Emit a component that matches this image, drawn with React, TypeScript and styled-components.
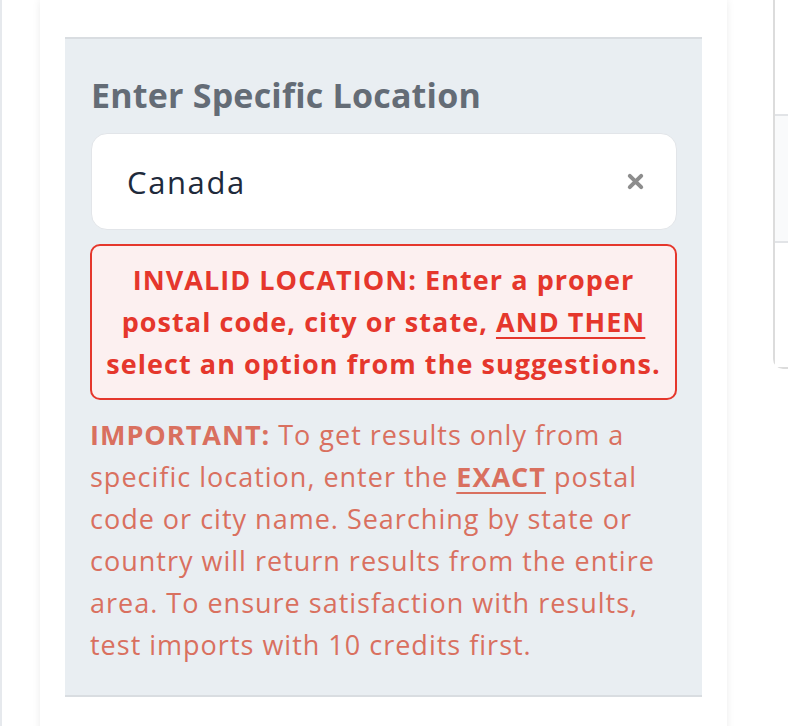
import styled, { createGlobalStyle } from 'styled-components'

const Global = createGlobalStyle`
  html, body {
    margin: 0;
    padding: 0;
    background: #ffffff;
    overflow: hidden;
  }
  body {
    font-family: "Open Sans", Lato, sans-serif;
  }
`

const Page = styled.div`
  display: flex;
  align-items: flex-start;
  height: 726px;
  width: 788px;
  overflow: hidden;
`

const EdgeStrip = styled.div`
  width: 2px;
  height: 100%;
  background: #e6e9ed;
  flex-shrink: 0;
`

const Card = styled.div`
  margin-left: 38px;
  width: 687px;
  height: 760px;
  flex-shrink: 0;
  background: #ffffff;
  box-shadow: 0 0 8px rgba(0, 0, 0, 0.08);
  padding: 37px 25px 0;
  box-sizing: border-box;
`

const Panel = styled.section`
  background: #e9eef2;
  border-top: 2px solid #d9dde1;
  border-bottom: 2px solid #d9dde1;
  padding: 36px 25px 29px;
`

const Heading = styled.h2`
  margin: 0 0 18px 1px;
  font-size: 34px;
  line-height: 40px;
  letter-spacing: 0.2px;
  font-weight: 700;
  color: #646c76;
`

const InputBox = styled.div`
  display: flex;
  align-items: center;
  justify-content: space-between;
  height: 97px;
  box-sizing: border-box;
  margin-left: 1px;
  padding: 0 31px 0 35px;
  background: #ffffff;
  border: 1.5px solid #e2e5e9;
  border-radius: 16px;
`

const InputText = styled.span`
  font-size: 31px;
  letter-spacing: 1.6px;
  color: #1e2a3b;
`

const ClearIcon = styled.svg`
  width: 19px;
  height: 19px;
  display: block;
`

const ErrorBox = styled.div`
  margin-top: 14px;
  padding: 13px 4px;
  background: #fcf0f0;
  border: 2px solid #e5372c;
  border-radius: 10px;
  text-align: center;
  font-size: 27px;
  line-height: 42px;
  letter-spacing: 1.05px;
  font-weight: 700;
  color: #e5372c;
`

const Line = styled.span`
  display: block;
  white-space: nowrap;
`

const Underlined = styled.span`
  text-decoration: underline;
  text-underline-offset: 5px;
  text-decoration-thickness: 2px;
`

const Note = styled.p`
  margin: 14px 0 0;
  font-size: 27px;
  line-height: 42px;
  letter-spacing: 1px;
  color: #d9705f;
`

const Strong = styled.strong<{ $underline?: boolean }>`
  font-weight: 700;
  text-decoration: ${p => (p.$underline ? 'underline' : 'none')};
  text-underline-offset: 5px;
  text-decoration-thickness: 2px;
`

const SideCard = styled.div`
  margin-left: 46px;
  width: 60px;
  flex-shrink: 0;
  border-left: 2px solid #dcdcdc;
  border-bottom: 2px solid #dcdcdc;
  border-bottom-left-radius: 10px;
  display: flex;
  flex-direction: column;
`

const SideRow = styled.div<{ $height: number; $shaded?: boolean }>`
  height: ${p => p.$height}px;
  background: ${p => (p.$shaded ? '#f9fafb' : '#ffffff')};
  & + & {
    border-top: 2px solid #e2e4e7;
  }
`

export default function App() {
  return (
    <>
      <Global />
      <Page>
        <EdgeStrip />
        <Card>
          <Panel>
            <Heading>Enter Specific Location</Heading>
            <InputBox>
              <InputText>Canada</InputText>
              <ClearIcon viewBox="0 0 20 20">
                <path
                  d="M4 4 L16 16 M16 4 L4 16"
                  stroke="#8d8d8d"
                  strokeWidth="4.2"
                  strokeLinecap="round"
                />
              </ClearIcon>
            </InputBox>
            <ErrorBox>
              <Line>INVALID LOCATION: Enter a proper</Line>
              <Line>
                postal code, city or state, <Underlined>AND THEN</Underlined>
              </Line>
              <Line>select an option from the suggestions.</Line>
            </ErrorBox>
            <Note>
              <Line>
                <Strong>IMPORTANT:</Strong> To get results only from a
              </Line>
              <Line>
                specific location, enter the <Strong $underline>EXACT</Strong>{' '}
                postal
              </Line>
              <Line>code or city name. Searching by state or</Line>
              <Line>country will return results from the entire</Line>
              <Line>area. To ensure satisfaction with results,</Line>
              <Line>test imports with 10 credits first.</Line>
            </Note>
          </Panel>
        </Card>
        <SideCard>
          <SideRow $height={114} />
          <SideRow $height={125} $shaded />
          <SideRow $height={124} />
        </SideCard>
      </Page>
    </>
  )
}
